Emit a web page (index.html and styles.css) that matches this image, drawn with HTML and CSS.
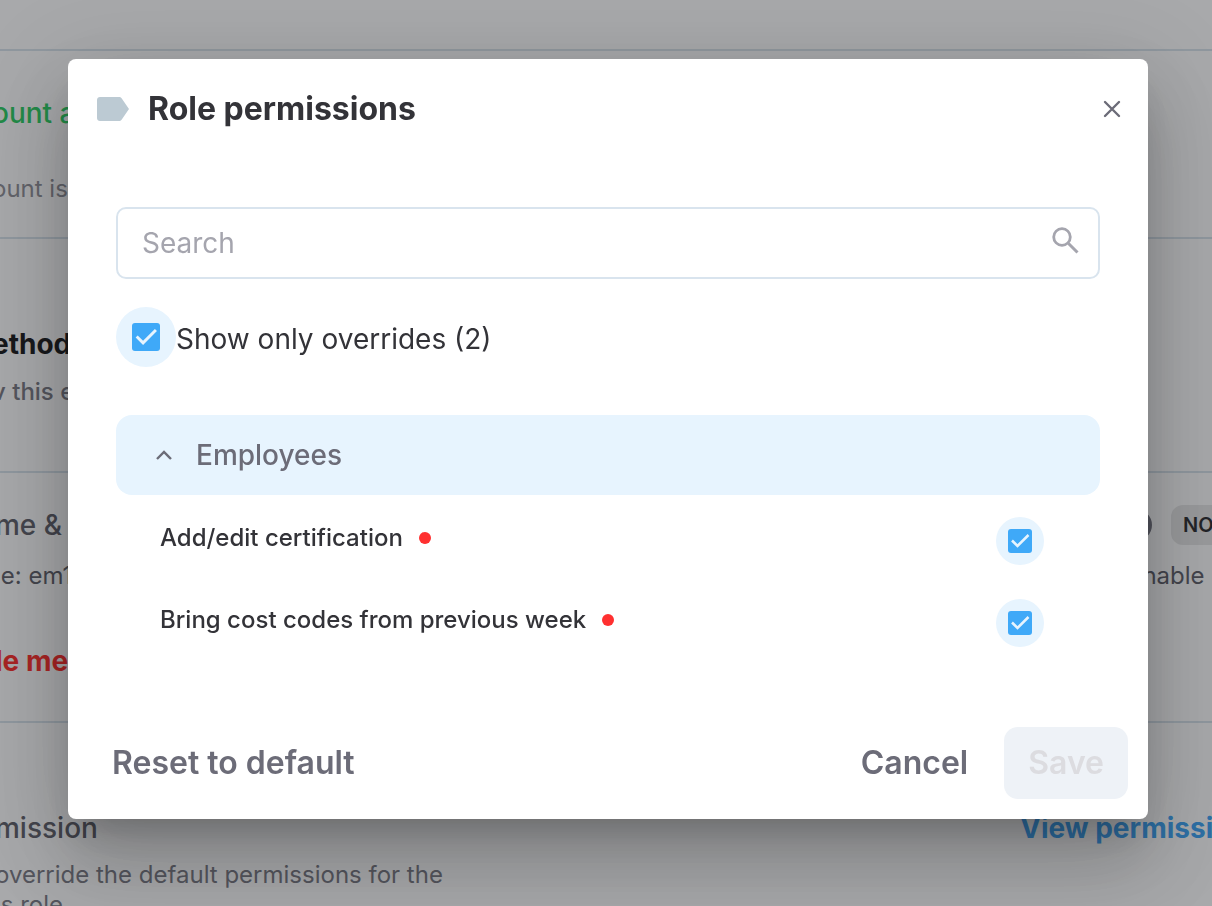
FILE: index.html
```
<!DOCTYPE html>
<html lang="en">
<head>
  <meta charset="UTF-8" />
  <meta name="viewport" content="width=device-width, initial-scale=1.0"/>
  <title>Role permissions</title>
  <link rel="stylesheet" href="styles.css">
</head>
<body>
  <main class="page">
    <div class="topbar"></div>

    <section class="section section-account">
      <div class="info">
        <h2 class="green">ount a</h2>
        <p class="light">ount is</p>
      </div>
    </section>

    <section class="section section-method">
      <div class="info">
        <h2 class="dark">ethod</h2>
        <p>v this e</p>
      </div>
    </section>

    <section class="section section-name">
      <div class="info">
        <h3>me &amp;</h3>
        <p class="strong">le: em1</p>
        <a href="#" class="remove">le met</a>
      </div>
      <div class="status">
        <div class="status-row">
          <span class="ring"></span>
          <span class="badge">NOT</span>
        </div>
        <p class="strong">Enable</p>
      </div>
    </section>

    <section class="section section-permission">
      <div class="info">
        <h3>mission</h3>
        <p>override the default permissions for the<br>is role</p>
      </div>
      <a href="#" class="view">View permissions</a>
    </section>
  </main>

  <!-- Modal -->
  <div class="overlay">
    <div class="modal" role="dialog" aria-labelledby="modalTitle">
      <header class="modal-header">
        <svg class="tag" viewBox="0 0 32 24" aria-hidden="true">
          <path d="M3 0h19c1 0 2 .4 2.600 1.300L32 12l-7.400 10.700C24 23.600 23 24 22 24H3c-1.700 0-3-1.300-3-3V3c0-1.700 1.300-3 3-3z" fill="#bccad3"/>
        </svg>
        <h1 id="modalTitle">Role permissions</h1>
        <button type="button" class="close" aria-label="Close">
          <svg viewBox="0 0 18 18"><path d="M2 2l14 14M16 2L2 16" fill="none" stroke="#6c6c78" stroke-width="2.400" stroke-linecap="round"/></svg>
        </button>
      </header>

      <div class="modal-body">
        <div class="search">
          <input type="text" placeholder="Search" aria-label="Search" />
          <svg viewBox="0 0 28 28" aria-hidden="true">
            <circle cx="10" cy="10" r="8.300" fill="none" stroke="#a5a5ae" stroke-width="2.800"/>
            <path d="M16.500 16.500l9 9" fill="none" stroke="#a5a5ae" stroke-width="3"/>
          </svg>
        </div>

        <label class="toggle">
          <span class="halo halo-lg"><input type="checkbox" checked /></span>
          <span class="toggle-text">Show only overrides (2)</span>
        </label>

        <button type="button" class="group" aria-expanded="true">
          <svg viewBox="0 0 18 12" aria-hidden="true"><path d="M2 10l7-7 7 7" fill="none" stroke="#6c6c78" stroke-width="2.400"/></svg>
          Employees
        </button>

        <ul class="permissions">
          <li>
            <label for="certification">Add/edit certification</label>
            <span class="dot"></span>
            <span class="halo"><input type="checkbox" id="certification" checked /></span>
          </li>
          <li>
            <label for="costCodes">Bring cost codes from previous week</label>
            <span class="dot"></span>
            <span class="halo"><input type="checkbox" id="costCodes" checked /></span>
          </li>
        </ul>
      </div>

      <footer class="modal-footer">
        <button type="button" class="btn reset">Reset to default</button>
        <button type="button" class="btn">Cancel</button>
        <button type="button" class="btn save" disabled>Save</button>
      </footer>
    </div>
  </div>
</body>
</html>
```
FILE: styles.css
```
* {
  margin: 0;
  padding: 0;
  box-sizing: border-box;
  font-family: Inter, Arial, sans-serif;
}

body, html {
  height: 100%;
  overflow: hidden;
}

body {
  background: white;
  color: #333338;
}

button {
  border: none;
  background: none;
  cursor: pointer;
}

/* Page */
.page {
  height: 100%;
  overflow: hidden;
  white-space: nowrap;
}

.topbar {
  height: 51px;
  border-bottom: 2px solid #d5e1ea;
}

.section {
  display: flex;
  justify-content: space-between;
  border-bottom: 2px solid #d5e1ea;
}

.section h2, .section h3, .remove, .view {
  font-size: 28px;
  line-height: 40px;
  font-weight: 500;
}

.section h2 {
  font-weight: 700;
}

.section h3 {
  color: #54545e;
}

.section p {
  font-size: 24px;
  line-height: 32px;
  color: #70707a;
}

.info {
  margin-left: -5px;
}

.section-account .info, .section-method .info {
  margin-left: -8px;
}

.section .green {
  color: #1acb56;
  font-weight: 500;
}

.section .dark {
  color: #08080a;
}

.section .light {
  color: #888890;
}

.section .strong {
  color: #54545e;
}

.section-account {
  padding: 42px 0 32px;
}

.section-account p {
  margin-top: 40px;
}

.section-method {
  padding: 85px 0 63px;
}

.section-method p {
  margin-top: 12px;
  font-weight: 500;
}

.section-name {
  padding: 32px 0 40px;
}

.section-name p {
  margin-top: 15px;
}

.section-permission {
  padding: 85px 0 0;
  border: none;
}

.section-permission p {
  margin-top: 12px;
  line-height: 30px;
}

.remove {
  display: block;
  margin-top: 49px;
  font-weight: 700;
  color: #ff1c18;
  text-decoration: none;
}

.status {
  width: 92px;
}

.status-row {
  display: flex;
  align-items: center;
  gap: 19px;
}

.status p {
  padding-left: 8px;
}

.ring {
  flex: none;
  width: 32px;
  height: 32px;
  border: 4px solid #6c6c78;
  border-radius: 50%;
}

.badge {
  padding: 0 12px;
  border-radius: 12px;
  background: #e6e6e6;
  color: #1c1c20;
  font-size: 20px;
  line-height: 40px;
  font-weight: 600;
}

.view {
  width: 192px;
  font-weight: 700;
  color: #2f9df4;
  text-decoration: none;
}

/* Modal */
.overlay {
  position: fixed;
  inset: 0;
  padding: 59px 64px 59px 68px;
  background: rgba(48, 49, 54, 0.42);
}

.modal {
  background: white;
  border-radius: 8px;
  box-shadow: 0 22px 30px -14px rgba(0, 0, 0, 0.2), 0 48px 76px 6px rgba(0, 0, 0, 0.14), 0 18px 92px 16px rgba(0, 0, 0, 0.12);
}

.modal-header {
  display: flex;
  align-items: center;
  padding: 30px 27px 30px 29px;
}

.modal-header h1 {
  flex: 1;
  margin-left: 19px;
  font-size: 32px;
  line-height: 40px;
  font-weight: 700;
}

.tag {
  width: 32px;
  height: 24px;
}

.close, .close svg {
  display: block;
  width: 18px;
  height: 18px;
}

.modal-body {
  padding: 48px 48px 0;
}

.search {
  display: flex;
  align-items: center;
  height: 72px;
  padding: 0 18px 0 24px;
  border: 2px solid #d9e4ee;
  border-radius: 10px;
}

.search input {
  flex: 1;
  min-width: 0;
  border: none;
  outline: none;
  font-size: 28px;
  line-height: 40px;
  color: #333338;
}

.search input::placeholder {
  color: #a5a5ae;
}

.search svg {
  width: 28px;
  height: 28px;
  margin-bottom: 4px;
}

.toggle {
  display: flex;
  align-items: center;
  margin-top: 28px;
  font-size: 28px;
  line-height: 40px;
}

.toggle-text {
  padding-top: 4px;
}

.halo {
  display: flex;
  justify-content: center;
  align-items: center;
  flex: none;
  width: 48px;
  height: 48px;
  border-radius: 50%;
  background: #e7f4fe;
}

.halo-lg {
  width: 60px;
  height: 60px;
}

.halo input {
  appearance: none;
  width: 24px;
  height: 24px;
  border-radius: 3px;
  background: #3fa9f8 url("data:image/svg+xml,%3Csvg xmlns='http://www.w3.org/2000/svg' viewBox='0 0 24 24'%3E%3Cpath d='M4 11.500l5.500 5.500L20.500 6' fill='none' stroke='%23e7f4fe' stroke-width='2.500'/%3E%3C/svg%3E") center / contain no-repeat;
}

.halo-lg input {
  width: 28px;
  height: 28px;
}

.group {
  display: flex;
  align-items: center;
  gap: 23px;
  width: 100%;
  height: 80px;
  margin-top: 48px;
  padding: 0 39px;
  border-radius: 16px;
  background: #e7f4fe;
  color: #6c6c78;
  font-size: 28px;
  line-height: 40px;
  font-weight: 500;
}

.group svg {
  width: 18px;
  height: 12px;
}

.permissions {
  padding: 5px 56px 0 44px;
  list-style: none;
}

.permissions li {
  display: flex;
  align-items: center;
  height: 82px;
}

.permissions label {
  padding-bottom: 6px;
  font-size: 24px;
  line-height: 32px;
  font-weight: 500;
}

.permissions .halo {
  margin-left: auto;
}

.dot {
  width: 12px;
  height: 12px;
  margin: 0 0 6px 16px;
  border-radius: 50%;
  background: #ff3030;
}

.modal-footer {
  display: flex;
  align-items: center;
  padding: 63px 20px 20px 44px;
}

.btn {
  color: #6c6c78;
  font-size: 32px;
  line-height: 40px;
  font-weight: 600;
}

.reset {
  margin-right: auto;
}

.save {
  margin-left: 36px;
  padding: 16px 24px;
  border-radius: 14px;
  background: #eef2f7;
  color: #dcdce0;
  cursor: default;
}
```
